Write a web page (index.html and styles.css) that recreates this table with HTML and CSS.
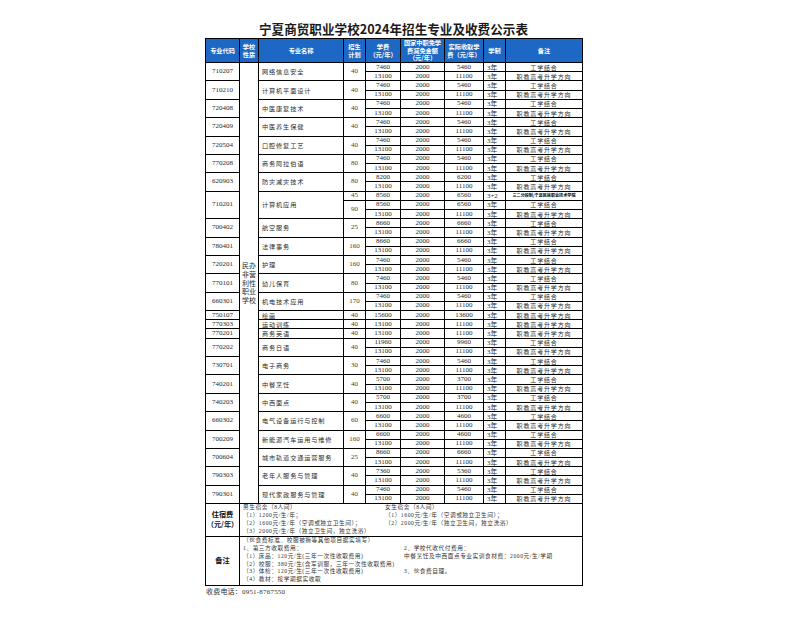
FILE: index.html
```html
<!DOCTYPE html>
<html lang="zh-CN">
<head>
<meta charset="utf-8">
<title>宁夏商贸职业学校2024年招生专业及收费公示表</title>
<link rel="stylesheet" href="styles.css">
</head>
<body>
<div class="page">
  <h1 class="title">宁夏商贸职业学校2024年招生专业及收费公示表</h1>
  <table class="fees">
    <colgroup>
      <col class="c-code"><col class="c-type"><col class="c-name"><col class="c-plan"><col class="c-fee"><col class="c-free"><col class="c-real"><col class="c-len"><col class="c-note">
    </colgroup>
    <thead>
      <tr class="head">
        <th>专业代码</th><th>学校<br>性质</th><th>专业名称</th><th>招生<br>计划</th><th>学费<br>（元/年）</th><th>国家中职免学<br>费减免金额<br>（元/年）</th><th>实际收取学<br>费（元/年）</th><th>学制</th><th>备注</th>
      </tr>
    </thead>
    <tbody class="data">
      <tr><td class="code" rowspan="2">710207</td><td class="type" rowspan="48">民办非营利性职业学校</td><td class="name" rowspan="2">网络信息安全</td><td class="plan" rowspan="2">40</td><td>7460</td><td>2000</td><td>5460</td><td class="len">3年</td><td class="note">工学结合</td></tr>
      <tr><td>13100</td><td>2000</td><td>11100</td><td class="len">3年</td><td class="note">职教高考升学方向</td></tr>

      <tr><td class="code" rowspan="2">710210</td><td class="name" rowspan="2">计算机平面设计</td><td class="plan" rowspan="2">40</td><td>7460</td><td>2000</td><td>5460</td><td class="len">3年</td><td class="note">工学结合</td></tr>
      <tr><td>13100</td><td>2000</td><td>11100</td><td class="len">3年</td><td class="note">职教高考升学方向</td></tr>

      <tr><td class="code" rowspan="2">720408</td><td class="name" rowspan="2">中医康复技术</td><td class="plan" rowspan="2">40</td><td>7460</td><td>2000</td><td>5460</td><td class="len">3年</td><td class="note">工学结合</td></tr>
      <tr><td>13100</td><td>2000</td><td>11100</td><td class="len">3年</td><td class="note">职教高考升学方向</td></tr>

      <tr><td class="code" rowspan="2">720409</td><td class="name" rowspan="2">中医养生保健</td><td class="plan" rowspan="2">40</td><td>7460</td><td>2000</td><td>5460</td><td class="len">3年</td><td class="note">工学结合</td></tr>
      <tr><td>13100</td><td>2000</td><td>11100</td><td class="len">3年</td><td class="note">职教高考升学方向</td></tr>

      <tr><td class="code" rowspan="2">720504</td><td class="name" rowspan="2">口腔修复工艺</td><td class="plan" rowspan="2">40</td><td>7460</td><td>2000</td><td>5460</td><td class="len">3年</td><td class="note">工学结合</td></tr>
      <tr><td>13100</td><td>2000</td><td>11100</td><td class="len">3年</td><td class="note">职教高考升学方向</td></tr>

      <tr><td class="code" rowspan="2">770208</td><td class="name" rowspan="2">商务阿拉伯语</td><td class="plan" rowspan="2">80</td><td>7460</td><td>2000</td><td>5460</td><td class="len">3年</td><td class="note">工学结合</td></tr>
      <tr><td>13100</td><td>2000</td><td>11100</td><td class="len">3年</td><td class="note">职教高考升学方向</td></tr>

      <tr><td class="code" rowspan="2">620903</td><td class="name" rowspan="2">防灾减灾技术</td><td class="plan" rowspan="2">80</td><td>8200</td><td>2000</td><td>6200</td><td class="len">3年</td><td class="note">工学结合</td></tr>
      <tr><td>13100</td><td>2000</td><td>11100</td><td class="len">3年</td><td class="note">职教高考升学方向</td></tr>

      <tr><td class="code" rowspan="3">710201</td><td class="name" rowspan="3">计算机应用</td><td class="plan">45</td><td>8560</td><td>2000</td><td>6560</td><td class="len">3+2</td><td class="note tiny">三二分段制/宁夏民族职业技术学院</td></tr>
      <tr><td class="plan" rowspan="2">90</td><td>8560</td><td>2000</td><td>6560</td><td class="len">3年</td><td class="note">工学结合</td></tr>
      <tr><td>13100</td><td>2000</td><td>11100</td><td class="len">3年</td><td class="note">职教高考升学方向</td></tr>

      <tr><td class="code" rowspan="2">700402</td><td class="name" rowspan="2">航空服务</td><td class="plan" rowspan="2">25</td><td>8660</td><td>2000</td><td>6660</td><td class="len">3年</td><td class="note">工学结合</td></tr>
      <tr><td>13100</td><td>2000</td><td>11100</td><td class="len">3年</td><td class="note">职教高考升学方向</td></tr>

      <tr><td class="code" rowspan="2">780401</td><td class="name" rowspan="2">法律事务</td><td class="plan" rowspan="2">160</td><td>8660</td><td>2000</td><td>6660</td><td class="len">3年</td><td class="note">工学结合</td></tr>
      <tr><td>13100</td><td>2000</td><td>11100</td><td class="len">3年</td><td class="note">职教高考升学方向</td></tr>

      <tr><td class="code" rowspan="2">720201</td><td class="name" rowspan="2">护理</td><td class="plan" rowspan="2">160</td><td>7460</td><td>2000</td><td>5460</td><td class="len">3年</td><td class="note">工学结合</td></tr>
      <tr><td>13100</td><td>2000</td><td>11100</td><td class="len">3年</td><td class="note">职教高考升学方向</td></tr>

      <tr><td class="code" rowspan="2">770101</td><td class="name" rowspan="2">幼儿保育</td><td class="plan" rowspan="2">80</td><td>7460</td><td>2000</td><td>5460</td><td class="len">3年</td><td class="note">工学结合</td></tr>
      <tr><td>13100</td><td>2000</td><td>11100</td><td class="len">3年</td><td class="note">职教高考升学方向</td></tr>

      <tr><td class="code" rowspan="2">660301</td><td class="name" rowspan="2">机电技术应用</td><td class="plan" rowspan="2">170</td><td>7460</td><td>2000</td><td>5460</td><td class="len">3年</td><td class="note">工学结合</td></tr>
      <tr><td>13100</td><td>2000</td><td>11100</td><td class="len">3年</td><td class="note">职教高考升学方向</td></tr>

      <tr><td class="code">750107</td><td class="name">绘画</td><td class="plan">40</td><td>15600</td><td>2000</td><td>13600</td><td class="len">3年</td><td class="note">职教高考升学方向</td></tr>
      <tr><td class="code">770303</td><td class="name">运动训练</td><td class="plan">40</td><td>13100</td><td>2000</td><td>11100</td><td class="len">3年</td><td class="note">职教高考升学方向</td></tr>
      <tr><td class="code">770201</td><td class="name">商务英语</td><td class="plan">40</td><td>13100</td><td>2000</td><td>11100</td><td class="len">3年</td><td class="note">职教高考升学方向</td></tr>

      <tr><td class="code" rowspan="2">770202</td><td class="name" rowspan="2">商务日语</td><td class="plan" rowspan="2">40</td><td>11960</td><td>2000</td><td>9960</td><td class="len">3年</td><td class="note">工学结合</td></tr>
      <tr><td>13100</td><td>2000</td><td>11100</td><td class="len">3年</td><td class="note">职教高考升学方向</td></tr>

      <tr><td class="code" rowspan="2">730701</td><td class="name" rowspan="2">电子商务</td><td class="plan" rowspan="2">30</td><td>7460</td><td>2000</td><td>5460</td><td class="len">3年</td><td class="note">工学结合</td></tr>
      <tr><td>13100</td><td>2000</td><td>11100</td><td class="len">3年</td><td class="note">职教高考升学方向</td></tr>

      <tr><td class="code" rowspan="2">740201</td><td class="name" rowspan="2">中餐烹饪</td><td class="plan" rowspan="2">40</td><td>5700</td><td>2000</td><td>3700</td><td class="len">3年</td><td class="note">工学结合</td></tr>
      <tr><td>13100</td><td>2000</td><td>11100</td><td class="len">3年</td><td class="note">职教高考升学方向</td></tr>

      <tr><td class="code" rowspan="2">740203</td><td class="name" rowspan="2">中西面点</td><td class="plan" rowspan="2">40</td><td>5700</td><td>2000</td><td>3700</td><td class="len">3年</td><td class="note">工学结合</td></tr>
      <tr><td>13100</td><td>2000</td><td>11100</td><td class="len">3年</td><td class="note">职教高考升学方向</td></tr>

      <tr><td class="code" rowspan="2">660302</td><td class="name" rowspan="2">电气设备运行与控制</td><td class="plan" rowspan="2">60</td><td>6600</td><td>2000</td><td>4600</td><td class="len">3年</td><td class="note">工学结合</td></tr>
      <tr><td>13100</td><td>2000</td><td>11100</td><td class="len">3年</td><td class="note">职教高考升学方向</td></tr>

      <tr><td class="code" rowspan="2">700209</td><td class="name" rowspan="2">新能源汽车运用与维修</td><td class="plan" rowspan="2">160</td><td>6600</td><td>2000</td><td>4600</td><td class="len">3年</td><td class="note">工学结合</td></tr>
      <tr><td>13100</td><td>2000</td><td>11100</td><td class="len">3年</td><td class="note">职教高考升学方向</td></tr>

      <tr><td class="code" rowspan="2">700604</td><td class="name" rowspan="2">城市轨道交通运营服务</td><td class="plan" rowspan="2">25</td><td>8660</td><td>2000</td><td>6660</td><td class="len">3年</td><td class="note">工学结合</td></tr>
      <tr><td>13100</td><td>2000</td><td>11100</td><td class="len">3年</td><td class="note">职教高考升学方向</td></tr>

      <tr><td class="code" rowspan="2">790303</td><td class="name" rowspan="2">老年人服务与管理</td><td class="plan" rowspan="2">40</td><td>7360</td><td>2000</td><td>5360</td><td class="len">3年</td><td class="note">工学结合</td></tr>
      <tr><td>13100</td><td>2000</td><td>11100</td><td class="len">3年</td><td class="note">职教高考升学方向</td></tr>

      <tr><td class="code" rowspan="2">790301</td><td class="name" rowspan="2">现代家政服务与管理</td><td class="plan" rowspan="2">40</td><td>7460</td><td>2000</td><td>5460</td><td class="len">3年</td><td class="note">工学结合</td></tr>
      <tr><td>13100</td><td>2000</td><td>11100</td><td class="len">3年</td><td class="note">职教高考升学方向</td></tr>
    </tbody>
    <tbody class="extra">
      <tr class="stay">
        <th class="label">住宿费<br>（元/年）</th>
        <td class="info" colspan="8">
          <div class="cols stay-cols">
            <div class="col">
              <div class="line">男生宿舍（8人间）</div>
              <div class="line">（1）1200元/生/年；</div>
              <div class="line">（2）1600元/生/年（空调或独立卫生间）；</div>
              <div class="line">（3）2000元/生/年（独立卫生间，独立洗浴）</div>
            </div>
            <div class="col">
              <div class="line">女生宿舍（8人间）</div>
              <div class="line">（1）1600元/生/年（空调或独立卫生间）；</div>
              <div class="line">（2）2000元/生/年（独立卫生间，独立洗浴）</div>
            </div>
          </div>
        </td>
      </tr>
      <tr class="remark">
        <th class="label">备注</th>
        <td class="info" colspan="8">
          <div class="cols remark-cols">
            <div class="col">
              <div class="line">（伙食费标准、校服被褥等其他项目据实填写）</div>
              <div class="line">1、第三方收取费用：</div>
              <div class="line">（1）床品：120元/生(三年一次性收取费用)</div>
              <div class="line">（2）校服：380元/生(含军训服，三年一次性收取费用)</div>
              <div class="line">（3）体检：120元/生(三年一次性收取费用)</div>
              <div class="line">（4）教材：按学期据实收取</div>
            </div>
            <div class="col">
              <div class="line"></div>
              <div class="line">2、学校代收代付费用：</div>
              <div class="line">中餐烹饪及中西面点专业实训食材费：2000元/生/学期</div>
              <div class="line"></div>
              <div class="line">3、伙食费自理。</div>
            </div>
          </div>
        </td>
      </tr>
    </tbody>
  </table>
  <p class="phone">收费电话：0951-8767550</p>
</div>
</body>
</html>
```
FILE: styles.css
```css
html, body {
  margin: 0;
  padding: 0;
  background: #ffffff;
}

.page {
  width: 377px;
  margin-left: 205px;
  font-family: "Liberation Serif", "Noto Sans CJK SC", serif;
  color: #222;
}

.title {
  margin: 0;
  padding-top: 20px;
  height: 18px;
  line-height: 18px;
  font-family: "Noto Sans CJK SC", sans-serif;
  font-size: 12.6px;
  font-weight: 700;
  color: #1a1a1a;
  text-align: center;
  white-space: nowrap;
}

.fees {
  width: 377px;
  table-layout: fixed;
  border-collapse: collapse;
  border: 1px solid #000;
}

.c-code { width: 34px; }
.c-type { width: 19px; }
.c-name { width: 85px; }
.c-plan { width: 22px; }
.c-fee  { width: 35px; }
.c-free { width: 44px; }
.c-real { width: 39px; }
.c-len  { width: 22px; }
.c-note { width: 77px; }

.head th {
  height: 23px;
  padding: 0;
  background: #1c68c4;
  color: #fff;
  border: 1px solid #000;
  font-family: "Noto Sans CJK SC", sans-serif;
  font-size: 6.2px;
  line-height: 7.6px;
  font-weight: 700;
  text-align: center;
  vertical-align: middle;
}

.data tr {
  height: 9.2px;
}

.data td {
  padding: 0;
  border: 1px solid #000;
  font-size: 7px;
  line-height: 7px;
  text-align: center;
  vertical-align: middle;
  white-space: nowrap;
  overflow: hidden;
  color: #2a2a2a;
}

.data td.type {
  white-space: normal;
  font-family: "Noto Sans CJK SC", sans-serif;
  font-size: 7px;
  line-height: 8.7px;
  padding: 0;
  word-break: break-all;
}

.data td.name {
  text-align: left;
  padding-left: 3px;
  font-family: "Noto Sans CJK SC", sans-serif;
  font-size: 6.2px;
  letter-spacing: 0.85px;
}

.data td.plan {
  font-size: 7px;
  color: #5a3b22;
}

.data td.len {
  font-size: 6.8px;
  text-align: left;
  padding-left: 3px;
}

.data td.note {
  font-family: "Noto Sans CJK SC", sans-serif;
  font-size: 6px;
  letter-spacing: 0.85px;
}

.data td.note.tiny {
  font-size: 4.1px;
  letter-spacing: 0;
  font-weight: 700;
  color: #000;
}

.extra th.label {
  padding: 0;
  border: 1px solid #000;
  font-family: "Noto Sans CJK SC", sans-serif;
  font-size: 7.2px;
  line-height: 9.5px;
  font-weight: 700;
  text-align: center;
  vertical-align: middle;
  color: #111;
}

.extra td.info {
  padding: 0 0 0 3px;
  border: 1px solid #000;
  vertical-align: middle;
}

.stay td.info { height: 31px; }
.remark td.info { height: 48px; }

.cols {
  display: grid;
  font-family: "Liberation Serif", "Noto Sans CJK SC", serif;
  font-size: 5.7px;
  line-height: 7.9px;
  letter-spacing: 0.55px;
  color: #333;
  white-space: nowrap;
}

.stay-cols { grid-template-columns: 142px 1fr; }
.remark-cols { grid-template-columns: 161px 1fr; }

.line {
  height: 7.9px;
}

.phone {
  margin: 2px 0 0 1px;
  font-size: 7px;
  line-height: 9px;
  letter-spacing: 0.2px;
  color: #333;
}
```
